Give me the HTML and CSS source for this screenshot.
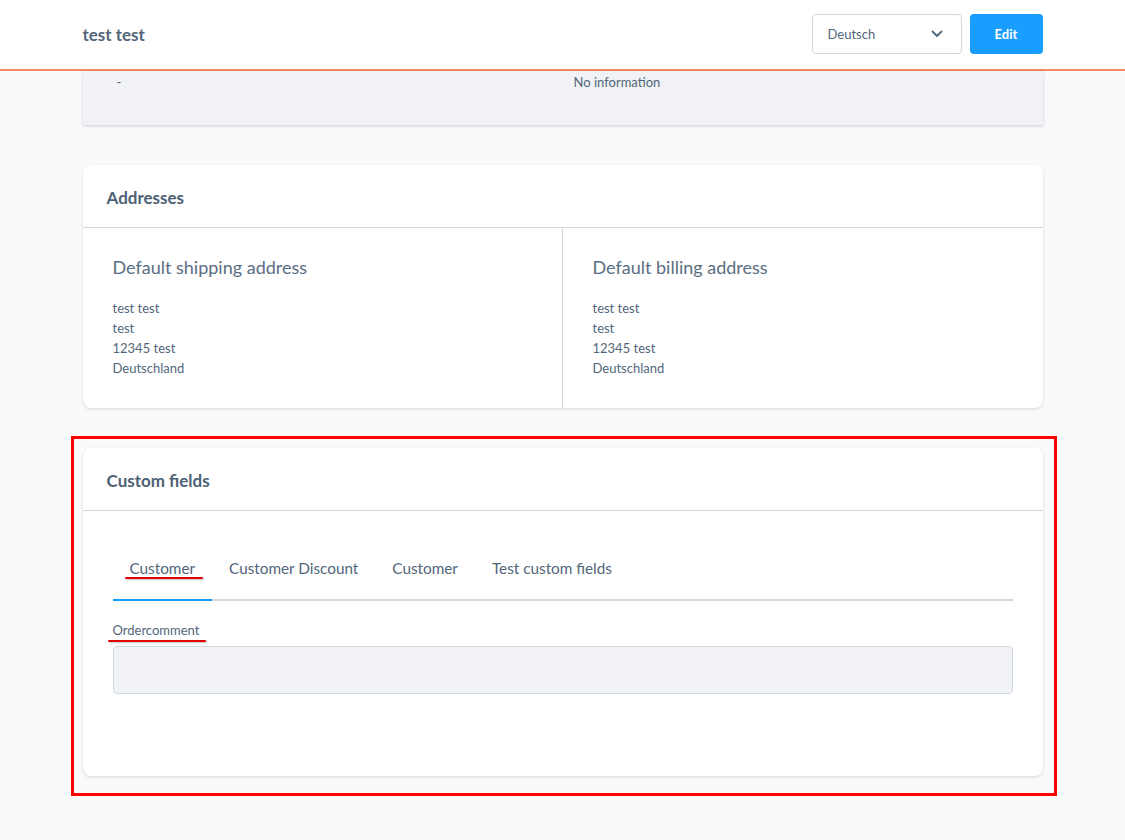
FILE: index.html
```html
<!DOCTYPE html>
<html>
<head>
<meta charset="utf-8">
<link rel="stylesheet" href="styles.css">
</head>
<body>
<header class="topbar">
  <div class="container topbar-inner">
    <h1 class="page-title">test test</h1>
    <div class="actions">
      <div class="select">
        <span>Deutsch</span>
        <svg width="12" height="8" viewBox="0 0 12 8"><path d="M1.5 1.5 L6 6 L10.5 1.5" fill="none" stroke="#52667a" stroke-width="1.8" stroke-linecap="round" stroke-linejoin="round"/></svg>
      </div>
      <button class="btn-edit">Edit</button>
    </div>
  </div>
</header>

<main class="container">
  <div class="fragment">
    <span class="frag-left">-</span>
    <span class="frag-right">No information</span>
  </div>

  <section class="card addresses">
    <div class="card-header">Addresses</div>
    <div class="addr-grid">
      <div class="addr-col">
        <h2 class="addr-title">Default shipping address</h2>
        <p class="addr-lines">test test<br>test<br>12345 test<br>Deutschland</p>
      </div>
      <div class="addr-col divided">
        <h2 class="addr-title">Default billing address</h2>
        <p class="addr-lines">test test<br>test<br>12345 test<br>Deutschland</p>
      </div>
    </div>
  </section>

  <div class="highlight">
    <section class="card custom">
      <div class="card-header">Custom fields</div>
      <div class="card-body">
        <nav class="tabs">
          <span class="tab active"><span class="marked">Customer</span></span>
          <span class="tab">Customer Discount</span>
          <span class="tab">Customer</span>
          <span class="tab">Test custom fields</span>
        </nav>
        <label class="field-label"><span class="marked">Ordercomment</span></label>
        <div class="field-input"></div>
      </div>
    </section>
  </div>
</main>
</body>
</html>
```

FILE: styles.css
```css
* { box-sizing: border-box; }
html, body { margin: 0; padding: 0; }
body {
  background: #f9fafb;
  font-family: "Source Sans Pro", Lato, "Liberation Sans", sans-serif;
  color: #52667a;
  width: 1125px;
  height: 840px;
  overflow: hidden;
}
.container { width: 960px; margin: 0 auto; }

.topbar {
  background: #fff;
  height: 71px;
  border-bottom: 2px solid #f28a62;
}
.topbar-inner {
  display: flex;
  align-items: center;
  justify-content: space-between;
  height: 69px;
}
.page-title {
  margin: 0;
  font-size: 17px;
  font-weight: 700;
  color: #52667a;
}
.actions { display: flex; gap: 8px; align-items: center; margin-top: -1px; }
.select {
  width: 150px;
  height: 40px;
  border: 1px solid #d1d9e0;
  border-radius: 4px;
  display: flex;
  align-items: center;
  justify-content: space-between;
  padding: 0 18px 0 15px;
  font-size: 13px;
  color: #52667a;
  background: #fff;
}
.btn-edit {
  width: 73px;
  height: 40px;
  border: none;
  border-radius: 4px;
  background: #189eff;
  color: #fff;
  font-family: inherit;
  font-weight: 700;
  font-size: 13px;
}

.fragment {
  height: 54px;
  background: #f0f2f5;
  box-shadow: 0 1px 3px rgba(0,0,0,0.18);
  display: flex;
  font-size: 13px;
  padding-top: 3px;
  margin-bottom: 40px;
}
.frag-left { width: 491px; padding-left: 34px; }

.card {
  background: #fff;
  border-radius: 8px;
  box-shadow: 0 1px 3px rgba(0,0,0,0.15);
}
.card-header {
  height: 63px;
  border-bottom: 1px solid #d1d9e0;
  padding: 2px 24px 0;
  display: flex;
  align-items: center;
  font-size: 17px;
  font-weight: 700;
  color: #4d6175;
}
.addr-grid { display: grid; grid-template-columns: 479px 1fr; height: 180px; }
.addr-col { padding: 28px 30px; }
.addr-col.divided { border-left: 1px solid #d1d9e0; }
.addr-title {
  margin: 0 0 20px;
  font-size: 18px;
  font-weight: 400;
  line-height: 22px;
  color: #5a6e82;
}
.addr-lines {
  margin: 0;
  font-size: 13px;
  line-height: 20px;
}

.highlight {
  margin: 28px -14px 0 -12px;
  border: 3px solid #ff0000;
  padding: 9px 11px 17px 9px;
}
.card.custom { height: 328px; }
.card-body { padding: 32px 30px; }
.tabs {
  display: flex;
  border-bottom: 2px solid #d1d9e0;
  height: 58px;
  align-items: center;
  padding-top: 15px;
  font-size: 15.3px;
  color: #52667a;
}
.tab {
  padding: 0 17px;
  height: 100%;
  display: flex;
  align-items: flex-start;
  line-height: 20px;
  position: relative;
}
.tab.active::after {
  content: "";
  position: absolute;
  left: 0; right: 0;
  bottom: -2px;
  height: 2px;
  background: #189eff;
}
.marked { position: relative; }
.marked::after {
  content: "";
  position: absolute;
  left: -5px;
  right: -7px;
  bottom: -3px;
  height: 2px;
  background: #e00000;
  box-shadow: 1px 1px 2px rgba(0,0,0,0.25);
  border-radius: 1px;
}
.tab.active .marked::after { left: -5px; right: -8px; bottom: -1px; }
.field-label {
  display: block;
  margin-top: 21px;
  font-size: 13px;
  line-height: 16px;
  color: #52667a;
}
.field-label .marked::after { bottom: -4px; }
.field-input {
  margin-top: 8px;
  height: 48px;
  background: #f0f2f5;
  border: 1px solid #d1d9e0;
  border-radius: 4px;
}
```
